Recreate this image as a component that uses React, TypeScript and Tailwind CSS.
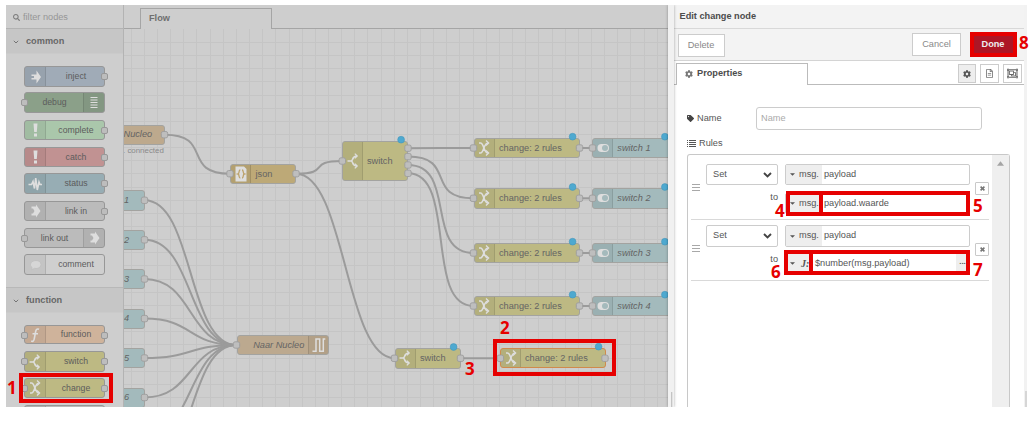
import React from "react";
import { FaCog, FaTag, FaSearch, FaRegFileAlt, FaRegObjectGroup } from "react-icons/fa";

type IconName =
  | "inject" | "debug" | "bang" | "status" | "link" | "comment"
  | "function" | "switch" | "change" | "json" | "toggle" | "serial";

const paint = "#dedede";

function Glyph({ name }: { name: IconName }) {
  const line = { fill: "none", stroke: paint, strokeWidth: 1.6 };
  return (
    <svg viewBox="0 0 20 20" className="h-5 w-5 shrink-0">
      {name === "inject" && <path fill={paint} d="M6.500 7.500h5V3.500l4.500 6.500-4.500 6.500v-4h-5v-1.500H9V9H6.500z" />}
      {name === "debug" && <path {...line} strokeWidth={1.2} d="M6.500 4.500h7M6.500 7h7M6.500 9.500h7M6.500 12h7M6.500 14.500h7" />}
      {name === "bang" && <path fill={paint} d="M8.500 3.500h4l-.7 8.500H9.200zM9 13.500h3v3H9z" />}
      {name === "status" && <path {...line} d="M3.500 10.500h3l1.500-3 1.500 7L10.700 4l1.600 12 1.700-8 1 2.500h2" />}
      {name === "link" && <path fill={paint} d="M6.500 5.500H11V3.500l4.500 6.500-4.500 6.500v-2H6.500v-2H8l1.500-2.500L8 7.500H6.500z" />}
      {name === "comment" && (
        <path fill="#d6d6d6" stroke="#bebebe" strokeWidth=".8" d="M11 5.500c3 0 5 1.700 5 4s-2 4-5 4l-1.500-.2L6.500 15l.6-2.500C6 11.800 5.500 10.800 5.500 9.500c0-2.300 2.500-4 5.500-4z" />
      )}
      {name === "function" && <path {...line} d="M14 4.300c-2-.9-3 .3-3.300 2L9.200 14c-.3 2-1.400 2.800-3 2.100M7.500 8.700h5.500" />}
      {name === "switch" && (
        <g {...line}>
          <path d="M4.500 10h3.500C10.500 10 8.500 5 14 5M8 10c2.500 0 .5 5 6 5" />
          <path d="M11.800 2.600l2.400 2.400-2.400 2.400M11.800 12.600l2.400 2.400-2.400 2.400" strokeWidth="1.300" />
        </g>
      )}
      {name === "change" && (
        <g {...line}>
          <path d="M5 5h1.500C10 5 9.500 15 14 15M5 15h1.500C10 15 9.500 5 14 5" />
          <path d="M12 2.600l2.600 2.400L12 7.400M12 12.600l2.600 2.400-2.600 2.400" strokeWidth="1.300" />
        </g>
      )}
      {name === "json" && (
        <g>
          <path fill={paint} d="M4.500 2.500h8.500l2.500 2.500v12.500h-11z" />
          <path fill="none" stroke="#bda46d" strokeWidth="1.300" d="M9.300 6C7.300 6 8.800 9.500 7 10c1.800.5.3 4 2.300 4M11 6c2 0 .5 3.500 2.300 4-1.800.5-.3 4-2.300 4" />
        </g>
      )}
      {name === "toggle" && (
        <g>
          <rect x="4.500" y="6" width="11.500" height="8" rx="4" fill={paint} />
          <circle cx="12" cy="10" r="3" fill="#a4babc" />
        </g>
      )}
      {name === "serial" && <path {...line} strokeWidth={1.500} d="M3.500 16.300h3.500V4h3.700v12.300h3.600V4h2" />}
    </svg>
  );
}

const portClass = "absolute h-[7px] w-[7px] rounded-[2px] border border-[#989898] bg-[#bdbdbd]";

type PaletteEntry = { label: string; icon: IconName; color: string; box: string; input?: boolean; output?: boolean; flip?: boolean };

const common: PaletteEntry[] = [
  { label: "inject", icon: "inject", color: "bg-[#a0abb7]", box: "h-[21px]", output: true },
  { label: "debug", icon: "debug", color: "bg-[#8ba089]", box: "h-[21px] mt-[5px]", input: true, flip: true },
  { label: "complete", icon: "bang", color: "bg-[#aac7ab]", box: "h-[20px] mt-[7px]", output: true },
  { label: "catch", icon: "bang", color: "bg-[#c19292]", box: "h-[20px] mt-[7px]", output: true },
  { label: "status", icon: "status", color: "bg-[#97adb4]", box: "h-[21px] mt-[6px]", output: true },
  { label: "link in", icon: "link", color: "bg-[#bbbbbb]", box: "h-[20px] mt-[7px]", output: true },
  { label: "link out", icon: "link", color: "bg-[#bbbbbb]", box: "h-[20px] mt-[7px]", input: true, flip: true },
  { label: "comment", icon: "comment", color: "bg-[#cfcfcf]", box: "h-[21px] mt-[6px]" },
];

const functions: PaletteEntry[] = [
  { label: "function", icon: "function", color: "bg-[#cfb39b]", box: "h-[19px]", input: true, output: true },
  { label: "switch", icon: "switch", color: "bg-[#bdb983]", box: "h-[21px] mt-[7px]", input: true, output: true },
  { label: "change", icon: "change", color: "bg-[#bdb983]", box: "h-[20px] mt-[6px]", input: true, output: true },
  { label: "", icon: "change", color: "bg-[#bbbbbb]", box: "h-[21px] mt-[7px]" },
];

function PaletteNode({ n }: { n: PaletteEntry }) {
  return (
    <div className={`relative ml-[18px] w-[81px] shrink-0 ${n.box}`}>
      <div className={`flex h-full overflow-hidden rounded-[3px] border border-[#979797] ${n.flip ? "flex-row-reverse" : ""} ${n.color}`}>
        <div className={`flex w-[21px] items-center justify-center bg-black/5 ${n.flip ? "border-l" : "border-r"} border-black/10`}>
          <Glyph name={n.icon} />
        </div>
        <div className={`flex flex-1 items-center justify-center pt-px text-[8.700px] text-[#5c5c5c] ${n.flip ? "pl-px" : "pl-0.5"}`}>{n.label}</div>
      </div>
      {n.input && <span className={`${portClass} -left-[3px] top-[7px]`} />}
      {n.output && <span className={`${portClass} -right-[3px] top-[7px]`} />}
    </div>
  );
}

function Category({ title, items }: { title: string; items: PaletteEntry[] }) {
  return (
    <>
      <div className="flex h-[25px] shrink-0 items-center border-b border-[#cacaca] bg-[#c6c6c6] pl-[7px] pt-[2px] text-[9.200px] font-bold text-[#686868]">
        <svg viewBox="0 0 6 6" className="mr-[7px] h-[6px] w-[6px]"><path d="M.8 1.800L3 4l2.200-2.200" fill="none" stroke="#747474" /></svg>
        <span>{title}</span>
      </div>
      <div className="flex flex-col pt-[12px]">
        {items.map((n, i) => <PaletteNode key={i} n={n} />)}
      </div>
    </>
  );
}

const OX = 124;
const OY = 29;

type FlowNodeData = {
  x: number; y: number; w: number; h?: number; label: string; color: string; icon?: IconName;
  flip?: boolean; italic?: boolean; dot?: boolean; pad?: number; selected?: boolean;
};

const olive = "bg-[#bdb983]";
const teal = "bg-[#a3babc]";
const rowTops = [138, 188.300, 243, 296];
const inputTops = [190.300, 229.800, 269, 308.600, 348, 387.500];

const nodes: FlowNodeData[] = [
  { x: 90, y: 124.700, w: 75, label: "Nucleo", color: "bg-[#bda98d]", italic: true, pad: 32.500 },
  ...inputTops.map((y, i) => ({ x: 90, y, w: 55, label: String(i + 1), color: teal, italic: true, pad: 33 })),
  { x: 230, y: 164, w: 66, label: "json", color: "bg-[#bda977]", icon: "json", pad: 4.500 },
  { x: 342, y: 141, w: 66, h: 40, label: "switch", color: olive, icon: "switch", dot: true, pad: 4 },
  ...rowTops.map((y): FlowNodeData => ({ x: 473.500, y, w: 106, label: "change: 2 rules", color: olive, icon: "change", dot: true, pad: 4.500 })),
  ...rowTops.map((y, i): FlowNodeData => ({ x: 592.300, y, w: 79.500, label: `switch ${i + 1}`, color: teal, icon: "toggle", italic: true, dot: true, pad: 4 })),
  { x: 236.700, y: 335, w: 92.500, label: "Naar Nucleo", color: "bg-[#bca98f]", icon: "serial", flip: true, italic: true, pad: 15.500 },
  { x: 394.500, y: 348.300, w: 66, label: "switch", color: olive, icon: "switch", dot: true, pad: 4.500 },
  { x: 500, y: 348, w: 105.500, label: "change: 2 rules", color: olive, icon: "change", dot: true, pad: 4, selected: true },
];

const ports: [number, number][] = [
  [164.500, 134.700], ...inputTops.map((y): [number, number] => [144.500, y + 10]),
  [230, 173.700], [296, 173.700], [342.300, 161], [408, 148.200], [408, 156.600], [408, 165], [408, 173.300],
  ...rowTops.flatMap((y): [number, number][] => [[473.500, y + 10], [579.500, y + 10], [592.500, y + 10]]),
  [236.500, 345], [394.500, 358.300], [460.500, 358.300], [500.300, 358.300], [605, 358.300],
];

const wires: [number, number, number, number][] = [
  [164.500, 134.700, 230, 173.700], [296, 173.700, 342, 161], [296, 173.700, 394.500, 358.300],
  [408, 148.200, 473.500, 148], [408, 156.600, 473.500, 198.300], [408, 165, 473.500, 253], [408, 173.300, 473.500, 306],
  ...rowTops.map((y): [number, number, number, number] => [579.500, y + 10, 592.500, y + 10]),
  [460.500, 358.300, 500, 358.300],
  ...[200.300, 239.800, 279, 318.600, 358, 397.500, 437, 476].map((y): [number, number, number, number] => [144.500, y, 236.500, 345]),
];

function curve([x1, y1, x2, y2]: [number, number, number, number]) {
  const unit = 65.75;
  const reach = 0.75 * Math.min(unit, Math.hypot(x2 - x1, y2 - y1));
  return `M${x1} ${y1}C${x1 + reach} ${y1} ${x2 - reach} ${y2} ${x2} ${y2}`;
}

function FlowNode({ n }: { n: FlowNodeData }) {
  return (
    <div
      className={`absolute flex overflow-hidden rounded-[3px] border ${n.selected ? "border-[#d08a4c]" : "border-[#a3a3a0]"} ${n.flip ? "flex-row-reverse" : ""} ${n.color}`}
      style={{ left: n.x - OX, top: n.y - OY, width: n.w, height: n.h ?? 20.300 }}
    >
      {n.icon && (
        <div className={`flex w-[20px] shrink-0 items-center justify-center border-black/10 bg-black/5 ${n.flip ? "border-l" : "border-r"}`}>
          <Glyph name={n.icon} />
        </div>
      )}
      <div className={`flex flex-1 items-center whitespace-nowrap pt-px text-[9.200px] text-[#646464] ${n.italic ? "italic" : ""}`} style={{ paddingLeft: n.pad }}>
        {n.label}
      </div>
    </div>
  );
}

function Canvas() {
  return (
    <div className="relative min-h-0 flex-1 overflow-hidden bg-[#cecece]">
      <svg viewBox="124 29 544 378" className="absolute inset-0 h-[378px] w-[544px]">
        <g stroke="#c5c5c5" strokeWidth="1" shapeRendering="crispEdges">
          {Array.from({ length: 41 }, (_, i) => <path key={`v${i}`} d={`M${131.200 + i * 13.150} 29v378`} />)}
          {Array.from({ length: 28 }, (_, i) => <path key={`h${i}`} d={`M124 ${42.400 + i * 13.150}h544`} />)}
        </g>
        <g fill="none" stroke="#9b9b9b" strokeWidth="2">
          {wires.map((w, i) => <path key={i} d={curve(w)} />)}
        </g>
      </svg>
      {nodes.map((n, i) => <FlowNode key={i} n={n} />)}
      <svg viewBox="124 29 544 378" className="absolute inset-0 h-[378px] w-[544px]">
        {ports.map(([x, y], i) => <rect key={i} x={x - 3.200} y={y - 3.200} width="6.400" height="6.400" rx="1.800" fill="#bebebe" stroke="#9d9d9d" strokeWidth=".9" />)}
        {nodes.filter((n) => n.dot).map((n, i) => (
          <circle key={i} cx={n.x + n.w - 6.900} cy={n.y - 1.300} r="3.400" fill="#4ea9d0" stroke="#4697ba" strokeWidth=".6" />
        ))}
      </svg>
      <span className="absolute -left-px top-[117px] whitespace-nowrap text-[7.900px] leading-[10px] text-[#8a8a8a]">. connected</span>
    </div>
  );
}

function RemoveButton() {
  return (
    <div className="mb-[7px] flex h-[13px] w-[14px] items-center justify-center rounded-[1px] border border-[#c9c9c9] bg-white">
      <svg viewBox="0 0 6 6" className="h-[5px] w-[5px]"><path d="M.7.7l4.600 4.600M5.300.7L.7 5.300" stroke="#777" strokeWidth="1.900" /></svg>
    </div>
  );
}

function Caret() {
  return <svg viewBox="0 0 6 3" className="ml-[4px] mr-[4px] h-[3px] w-[5px] shrink-0"><path d="M0 0h6L3 3z" fill="#555" /></svg>;
}

function Rule({ box, top, bottom, gap, second }: { box: string; top: string; bottom: string; gap: string; second: React.ReactNode }) {
  return (
    <div className={`ml-[3px] flex w-[298px] border-b border-[#d9d9d9] ${box}`}>
      <div className="flex w-[15px] items-center pb-[8px] pl-px">
        <svg viewBox="0 0 8 8" shapeRendering="crispEdges" className="h-[8px] w-[8px]"><path d="M0 .5h8M0 3.500h8M0 6.500h8" stroke="#a8a8a8" strokeWidth="1" /></svg>
      </div>
      <div className="flex w-[72px] flex-col">
        <div className={`flex items-center justify-between rounded-[2px] border border-[#ccc] bg-white pl-[6px] pr-[5px] ${top}`}>
          <span>Set</span>
          <svg viewBox="0 0 9 6" className="h-[6px] w-[9px]"><path d="M1 1l3.500 3.500L8 1" fill="none" stroke="#444" strokeWidth="1.900" /></svg>
        </div>
        <div className="mt-[6px] text-right leading-[12px]">to</div>
      </div>
      <div className={`ml-[7px] flex w-[185px] flex-col ${gap}`}>
        <div className={`flex rounded-[2px] border border-[#ccc] bg-white ${top}`}>
          <div className="flex w-[36px] shrink-0 items-center overflow-hidden bg-[#eee]"><Caret /><span>msg.</span></div>
          <span className="flex items-center pl-[2px]">payload</span>
        </div>
        <div className={`flex rounded-[2px] border border-[#ccc] bg-white ${bottom}`}>{second}</div>
      </div>
      <div className="flex flex-1 items-center justify-end"><RemoveButton /></div>
    </div>
  );
}

function EditPanel() {
  return (
    <div className="flex w-[350px] shrink-0 flex-col bg-white text-[9.200px] text-[#555]">
      <div className="flex h-[24px] shrink-0 items-center border-b border-[#d8d8d8] bg-[#f3f3f3] pb-px pl-[5.500px] pt-[2px] font-bold text-[#4c4c4c]">Edit change node</div>
      <div className="flex h-[32px] shrink-0 items-start border-b border-[#d4d4d4] bg-[#f3f3f3] pl-[4px] pr-[7px] pt-[3px] text-[#888]">
        <div className="mt-[2px] flex h-[23px] w-[47px] items-center justify-center border border-[#ccc] bg-white pr-px">Delete</div>
        <div className="ml-auto mt-px flex h-[23px] w-[49px] items-center justify-center border border-[#ccc] bg-white">Cancel</div>
        <div className="ml-[9px] flex h-[25px] w-[47px] items-center justify-center border-[4px] border-[#e60000] bg-[#ad1625] pr-px font-bold text-[#eee]">Done</div>
      </div>
      <div className="flex h-[24px] shrink-0 items-end">
        <div className="h-px w-[2px] bg-[#bbb]" />
        <div className="flex h-[22px] w-[132px] items-center border border-b-0 border-[#bbb] pb-[2px] pl-[8px] font-bold text-[#4c4c4c]">
          <FaCog className="mr-[4px] h-[8px] w-[8px] text-[#777]" />Properties
        </div>
        <div className="flex h-[22px] flex-1 items-start justify-end gap-[4px] border-b border-[#bbb] pr-[2px] pt-px">
          <div className="flex h-[19px] w-[18px] items-center justify-center border border-[#ccc] bg-[#eee]"><FaCog className="h-[8px] w-[8px] text-[#555]" /></div>
          <div className="flex h-[19px] w-[19px] items-center justify-center border border-[#ccc]"><FaRegFileAlt className="h-[9px] w-[9px] text-[#777]" /></div>
          <div className="flex h-[19px] w-[19px] items-center justify-center border border-[#ccc]"><FaRegObjectGroup className="h-[11px] w-[11px] text-[#666]" /></div>
        </div>
      </div>
      <div className="flex min-h-0 flex-1 flex-col pl-[13px] pt-[22px]">
        <div className="flex h-[23px] shrink-0 items-center">
          <FaTag className="mr-[3px] h-[7px] w-[7px] text-[#444]" />
          <span className="w-[59px]">Name</span>
          <div className="flex h-full w-[226px] items-center rounded-[3px] border border-[#ccc] pl-[4px] text-[#aaa]">Name</div>
        </div>
        <div className="mt-[8px] flex h-[12px] shrink-0 items-center">
          <svg viewBox="0 0 9 8" shapeRendering="crispEdges" className="mr-[3px] h-[8px] w-[9px]">
            <path d="M0 .5h1M2 .5h7M0 2.500h1M2 2.500h7M0 4.500h1M2 4.500h7M0 6.500h1M2 6.500h7" stroke="#555" />
          </svg>
          Rules
        </div>
        <div className="mt-[4px] flex min-h-0 w-[323px] flex-1 rounded-t-[3px] border border-b-0 border-[#c8c8c8]">
          <div className="flex w-[304px] flex-col">
            <Rule box="h-[65px] pt-[9px]" top="h-[21px]" bottom="h-[21px]" gap="gap-[8px]" second={
              <>
                <div className="flex w-[36px] shrink-0 items-center overflow-hidden bg-[#eee]"><Caret /><span>msg.</span></div>
                <span className="flex items-center pl-[2px]">payload.waarde</span>
              </>
            } />
            <Rule box="h-[61px] pt-[5px]" top="h-[22px]" bottom="h-[21px]" gap="gap-[6px]" second={
              <>
                <div className="flex w-[26px] shrink-0 items-center bg-[#eee]"><Caret /><span className="pl-[2px] font-['Liberation_Serif',serif] text-[10px] font-bold italic">J:</span></div>
                <span className="flex flex-1 items-center pl-[3px]">$number(msg.payload)</span>
                <div className="flex w-[13px] items-center justify-center bg-[#eee] text-[8px] font-bold"><span className="-mt-[4px]">...</span></div>
              </>
            } />
          </div>
          <div className="flex flex-1 justify-center bg-[#efefef] pt-[6px]">
            <svg viewBox="0 0 8 5" className="h-[5px] w-[7px]"><path d="M0 5h8L4 0z" fill="#a5a5a5" /></svg>
          </div>
        </div>
      </div>
    </div>
  );
}

const marks: [string, string][] = [
  ["1", "left-[7px] top-[382px]"], ["2", "left-[500px] top-[322px]"], ["3", "left-[465px] top-[363px]"],
  ["4", "left-[775px] top-[205px]"], ["5", "left-[973px] top-[200px]"], ["6", "left-[771px] top-[266px]"],
  ["7", "left-[973px] top-[264px]"], ["8", "left-[1019px] top-[37px]"],
];

const frames = [
  "left-[19px] top-[373px] h-[30px] w-[94px]",
  "left-[493px] top-[339px] h-[37px] w-[123px]",
  "left-[786px] top-[191px] h-[25px] w-[37px]",
  "left-[819px] top-[191px] h-[25px] w-[151px]",
  "left-[784px] top-[250px] h-[25px] w-[29px]",
  "left-[809px] top-[250px] h-[25px] w-[161px]",
];

export default function App() {
  return (
    <div className="relative h-[421px] w-[1034px] overflow-hidden bg-white pl-[6px] pt-[5px] font-['Liberation_Sans',Arial,sans-serif]">
      <div className="flex h-[402px] w-[1021px] overflow-hidden">
        <div className="flex w-[118px] shrink-0 flex-col overflow-hidden border-r border-[#b3b3b3] bg-[#cecece]">
          <div className="flex h-[24px] shrink-0 items-center border-b border-[#b3b3b3] pl-[7px] pt-[2px] text-[9.200px] text-[#969696]">
            <FaSearch className="mr-[3px] h-[7px] w-[7px] text-[#7d7d7d]" />filter nodes
          </div>
          <div className="flex h-[259px] shrink-0 flex-col border-b border-[#b8b8b8]"><Category title="common" items={common} /></div>
          <Category title="function" items={functions} />
        </div>
        <div className="flex w-[544px] shrink-0 flex-col bg-[#cecece]">
          <div className="flex h-[24px] shrink-0 items-end">
            <div className="h-px w-[16px] bg-[#a5a5a5]" />
            <div className="flex h-[21px] w-[132px] items-center border border-b-0 border-[#a5a5a5] pl-[8px] text-[9.200px] font-bold text-[#6f6f6f]">Flow</div>
            <div className="h-px flex-1 bg-[#a5a5a5]" />
          </div>
          <Canvas />
        </div>
        <div className="z-10 flex w-[6px] shrink-0 items-end bg-[#f1f1f1] shadow-[0_0_3px_rgba(0,0,0,0.35)]">
          <div className="ml-[3px] h-[15px] w-[2px] border-l border-[#c4c4c4] bg-[#e3e3e3]" />
        </div>
        <EditPanel />
        <div className="flex flex-1 items-end bg-[#f2f2f2]"><div className="ml-px h-[16px] w-[2px] bg-[#d6d6d6]" /></div>
      </div>
      {frames.map((f) => <div key={f} className={`absolute z-20 border-[4px] border-[#e60000] ${f}`} />)}
      {marks.map(([t, p]) => (
        <span key={t} className={`absolute z-20 font-['Noto_Sans',sans-serif] text-[17px] font-bold leading-[12px] text-[#e60000] ${p}`}>{t}</span>
      ))}
    </div>
  );
}
